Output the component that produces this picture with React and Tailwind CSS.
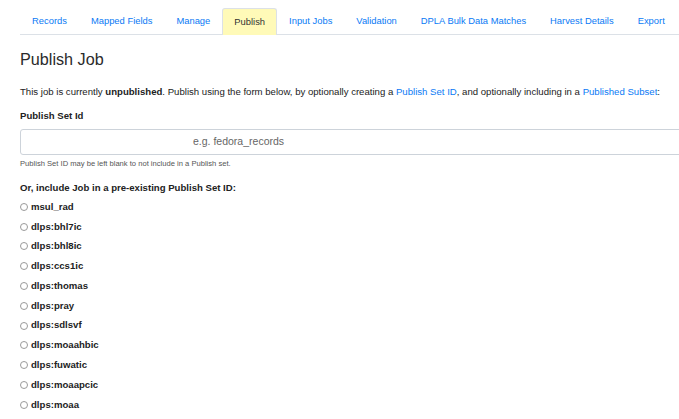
import React from 'react';

const tabs = ['Records', 'Mapped Fields', 'Manage', 'Publish', 'Input Jobs', 'Validation', 'DPLA Bulk Data Matches', 'Harvest Details', 'Export'];

const publishSets = [
  'msul_rad',
  'dlps:bhl7ic',
  'dlps:bhl8ic',
  'dlps:ccs1ic',
  'dlps:thomas',
  'dlps:pray',
  'dlps:sdlsvf',
  'dlps:moaahbic',
  'dlps:fuwatic',
  'dlps:moaapcic',
  'dlps:moaa',
];

function App() {
  return (
    <div className="w-full h-[419px] overflow-hidden bg-white text-[#333] font-['Liberation_Sans',Arial,sans-serif]">
      <div className="pl-[20px]">
        {/* Tabs */}
        <div className="mt-[8px] flex border-b border-[#dce1e7] w-[700px]">
          {tabs.map(tab => (
            <div
              key={tab}
              className={
                tab === 'Publish'
                  ? 'h-[27px] -mb-px px-[11px] flex items-center text-[9.4px] text-[#333] bg-[#fffab8] border border-[#dce1e7] border-b-0 rounded-t-[3px]'
                  : 'h-[26px] px-[12px] flex items-center text-[9.4px] text-[#0a7af5]'
              }
            >
              {tab}
            </div>
          ))}
        </div>

        <h2 className="mt-[14px] text-[16.2px] leading-[20px] text-[#2b2b2b]">Publish Job</h2>

        <p className="mt-[17px] text-[9.6px] leading-[12px] text-[#222]">
          This job is currently <b>unpublished</b>. Publish using the form below, by optionally creating a{' '}
          <a className="text-[#0a7af5]">Publish Set ID</a>, and optionally including in a{' '}
          <a className="text-[#0a7af5]">Published Subset</a>:
        </p>

        <div className="mt-[12px] text-[9.6px] leading-[12px] font-bold text-[#222]">Publish Set Id</div>

        <div className="mt-[7px] w-[700px] h-[26px] border border-[#cdd3da] rounded-[3px] flex items-center pl-[172px] text-[10.5px] text-[#666]">
          e.g. fedora_records
        </div>

        <div className="mt-[4px] text-[7.6px] leading-[10px] text-[#555]">
          Publish Set ID may be left blank to not include in a Publish set.
        </div>

        <div className="mt-[13px] text-[9.6px] leading-[12px] font-bold text-[#222]">Or, include Job in a pre-existing Publish Set ID:</div>

        <div className="mt-[3px] flex flex-col">
          {publishSets.map(set => (
            <div key={set} className="h-[19.8px] flex items-center">
              <span className="w-[8px] h-[8px] rounded-full border border-[#9a9a9a] bg-white mr-[3px]"></span>
              <span className="text-[9.6px] font-bold text-[#222]">{set}</span>
            </div>
          ))}
        </div>
      </div>
    </div>
  );
}

export default App;
